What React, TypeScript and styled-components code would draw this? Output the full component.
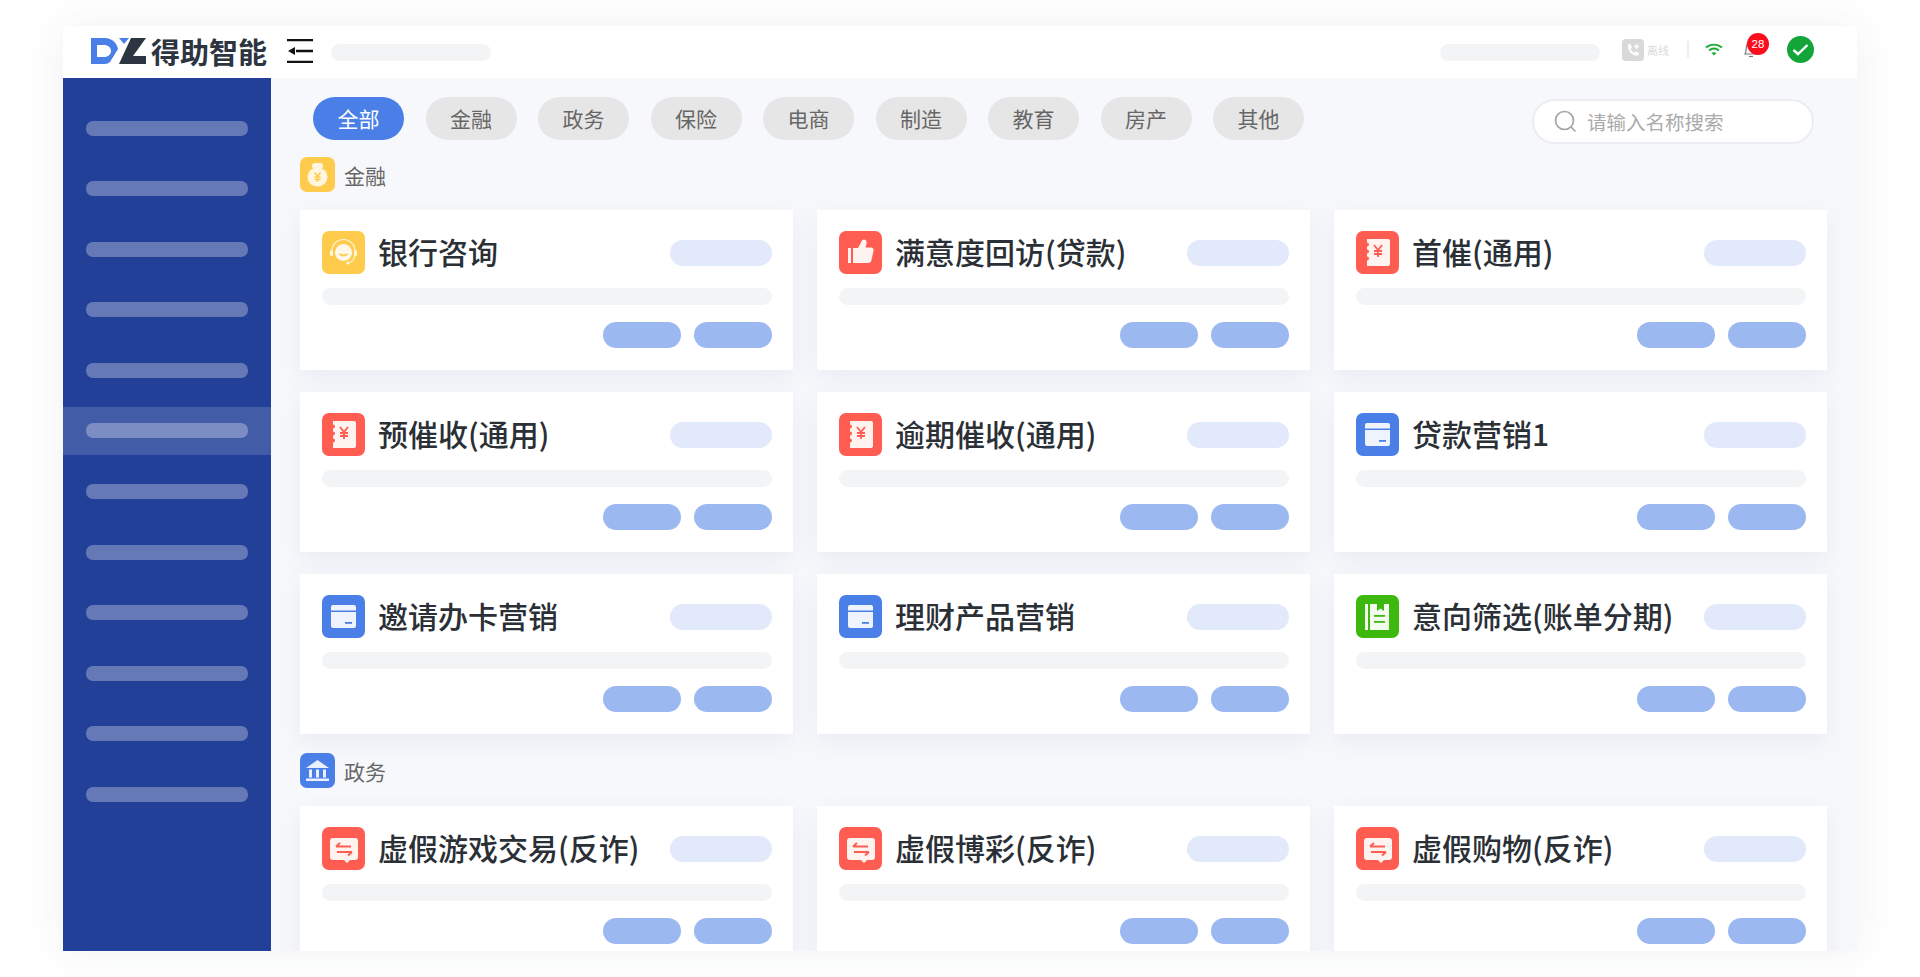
import React from "react";
import styled, { createGlobalStyle } from "styled-components";

const GlobalStyle = createGlobalStyle`
  html, body {
    margin: 0;
    padding: 0;
    background: #fff;
    font-family: "Noto Sans CJK SC", "Noto Sans", sans-serif;
  }
  * {
    box-sizing: border-box;
  }
`;

const Page = styled.div`
  width: 1920px;
  height: 977px;
  padding: 26px 63px;
  overflow: hidden;
`;

const Frame = styled.div`
  width: 1794px;
  height: 925px;
  display: flex;
  flex-direction: column;
  background: #fff;
  box-shadow: 0 0 40px rgba(40, 50, 80, 0.07);
`;

const Header = styled.header`
  height: 52px;
  flex: none;
  display: flex;
  align-items: center;
  padding: 0 43px 0 28px;
  background: #fff;
`;

const Brand = styled.div`
  display: flex;
  align-items: center;
  gap: 4px;
  margin-right: 20px;
  margin-bottom: 2px;
`;

const BrandName = styled.span`
  font-size: 29px;
  line-height: 32px;
  font-weight: 700;
  color: #2c3540;
  white-space: nowrap;
`;

const Skeleton = styled.div<{ $w: number; $h?: number; $color?: string }>`
  width: ${(p) => p.$w}px;
  height: ${(p) => p.$h ?? 17}px;
  flex: none;
  border-radius: ${(p) => ((p.$h ?? 17) >= 26 ? 13 : 9)}px;
  background: ${(p) => p.$color ?? "#f3f4f6"};
`;

const MenuButton = styled.div`
  display: flex;
  margin-right: 18px;
  margin-bottom: 2px;
`;

const HeaderRight = styled.div`
  margin-left: auto;
  display: flex;
  align-items: center;
  gap: 22px;
`;

const StatusGroup = styled.div`
  display: flex;
  align-items: center;
  margin-bottom: 5px;
`;

const OfflineText = styled.span`
  font-size: 11px;
  color: #dcdcdc;
  margin-left: 3px;
  white-space: nowrap;
`;

const Divider = styled.div`
  width: 2px;
  height: 17px;
  background: #eeeeee;
  margin: 0 16px 0 18px;
`;

const BellWrap = styled.div`
  position: relative;
  width: 24px;
  height: 24px;
  margin: 0 19px 7px 21px;
  display: flex;
  align-items: flex-end;
`;

const Badge = styled.span`
  position: absolute;
  left: 3px;
  top: -1px;
  width: 22px;
  height: 22px;
  border-radius: 50%;
  background: #fb0d1b;
  color: #fff;
  font-family: "Liberation Sans", sans-serif;
  font-size: 11.5px;
  line-height: 22px;
  text-align: center;
`;

const Body = styled.div`
  flex: 1;
  min-height: 0;
  display: flex;
`;

const Sidebar = styled.aside`
  width: 208px;
  flex: none;
  padding-top: 26px;
  background: #234099;
`;

const SideRow = styled.div<{ $active?: boolean }>`
  height: 48px;
  margin-bottom: 12.6px;
  padding: 0 23px;
  display: flex;
  align-items: center;
  background: ${(p) => (p.$active ? "rgba(255,255,255,0.15)" : "transparent")};
`;

const SideBar = styled.div`
  width: 163px;
  height: 15px;
  border-radius: 7px;
  background: rgba(255, 255, 255, 0.3);
`;

const Main = styled.main`
  flex: 1;
  min-width: 0;
  overflow: hidden;
  padding: 19px 30px 0 29px;
  background: #f7f8fb;
`;

const TabBar = styled.div`
  display: flex;
  align-items: flex-start;
  padding: 0 13px 0 13px;
  margin-bottom: 13px;
`;

const Tab = styled.div<{ $active?: boolean }>`
  width: 91px;
  height: 43px;
  margin-right: 21.5px;
  border-radius: 22px;
  font-size: 21px;
  line-height: 43px;
  text-align: center;
  color: ${(p) => (p.$active ? "#fff" : "#666")};
  background: ${(p) => (p.$active ? "#4a7fe8" : "#e6e6e6")};
`;

const Search = styled.div`
  margin-left: auto;
  margin-top: 2px;
  width: 282px;
  height: 45px;
  display: flex;
  align-items: center;
  gap: 10px;
  padding-left: 20px;
  background: #fff;
  border: 2px solid #ebedf3;
  border-radius: 23px;
  font-size: 19.5px;
  color: #aaaaaa;
  white-space: nowrap;
`;

const SectionTitle = styled.div<{ $top?: number }>`
  display: flex;
  align-items: center;
  gap: 9px;
  height: 35px;
  margin-top: ${(p) => p.$top ?? 0}px;
  margin-bottom: 18px;
  font-size: 21px;
  color: #666;
`;

const CardGrid = styled.div`
  display: grid;
  grid-template-columns: repeat(3, 493px);
  column-gap: 24px;
  row-gap: 22px;
`;

const Card = styled.div`
  height: 160px;
  padding: 21px 21px 0 22px;
  background: #fff;
  box-shadow: 0 8px 22px rgba(90, 110, 170, 0.09);
`;

const CardHead = styled.div`
  height: 43px;
  display: flex;
  align-items: center;
  margin-bottom: 14px;
`;

const CardTitle = styled.div`
  margin-left: 13px;
  margin-right: auto;
  padding-bottom: 3px;
  font-size: 30px;
  line-height: 40px;
  font-weight: 500;
  color: #2b2f36;
  white-space: nowrap;
`;

const CardFoot = styled.div`
  display: flex;
  justify-content: flex-end;
  gap: 13px;
  margin-top: 17px;
`;

const TileBox = styled.div<{ $color: string; $size: number }>`
  width: ${(p) => p.$size}px;
  height: ${(p) => p.$size}px;
  flex: none;
  display: flex;
  border-radius: 7px;
  background: ${(p) => p.$color};
`;

const YELLOW = "#ffcb4c";
const RED = "#ff5d52";
const BLUE = "#4a7fe8";
const GREEN = "#3cb80f";

const W = "#fff3f0";

const Yen = ({ c, x, y }: { c: string; x: number; y: number }) => (
  <path
    d={`M${x - 4} ${y - 6}L${x} ${y - 1}L${x + 4} ${y - 6}M${x} ${y - 1}V${y + 6}M${x - 4} ${y}H${x + 4}M${x - 4} ${y + 3}H${x + 4}`}
    stroke={c}
    strokeWidth="1.8"
    fill="none"
  />
);

type IconKind = "headset" | "thumb" | "receipt" | "card" | "book" | "swap";

const tileColors: Record<IconKind, string> = {
  headset: YELLOW,
  thumb: RED,
  receipt: RED,
  card: BLUE,
  book: GREEN,
  swap: RED,
};

const Glyph = ({ kind }: { kind: IconKind }) => {
  switch (kind) {
    case "headset":
      return (
        <>
          <path d="M10 22V20A11.5 11.5 0 0 1 33 20V22" stroke="#fff6df" strokeWidth="1.2" fill="none" />
          <circle cx="21.5" cy="21.5" r="8.5" fill="#fff8e8" />
          <rect x="8" y="19" width="3" height="6" rx="1.5" fill="#fff6df" />
          <rect x="32" y="19" width="3" height="6" rx="1.5" fill="#fff6df" />
          <path d="M17 23Q21.5 27 26 23Q21.5 25 17 23Z" fill={YELLOW} stroke={YELLOW} />
          <path d="M33 24Q32 31 26 32" stroke="#fff6df" strokeWidth="1.2" fill="none" />
          <circle cx="26" cy="32" r="1.6" fill="#fff6df" />
        </>
      );
    case "thumb":
      return (
        <>
          <rect x="9" y="17" width="3" height="15" fill={W} />
          <path
            d="M14 17H19L23 9.500Q24.500 8 26.500 9Q28 10 27.500 13L26.500 16.500H32Q35 16.500 34.500 20L32.500 29Q32 32 29 32H14Z"
            fill={W}
          />
        </>
      );
    case "receipt":
      return (
        <>
          <path
            d="M11 8H32Q34 8 34 10V33Q34 35 32 35H11V29.500A2 2 0 0 0 11 25.500V22.500A2 2 0 0 0 11 18.500V15.500A2 2 0 0 0 11 11.500Z"
            fill={W}
          />
          <Yen c={RED} x={22} y={20} />
        </>
      );
    case "card":
      return (
        <>
          <rect x="9" y="10" width="25" height="23" rx="2" fill="#eef3fe" />
          <rect x="9" y="15.500" width="25" height="1.500" fill={BLUE} />
          <rect x="23" y="27" width="7" height="1.800" fill={BLUE} />
        </>
      );
    case "book":
      return (
        <>
          <rect x="9" y="9" width="3" height="26" fill="#f2fbed" />
          <path d="M14 9H21V16L24.500 13.500L28 16V9H33V35H14Z" fill="#f2fbed" />
          <rect x="18" y="20" width="11" height="1.800" fill={GREEN} />
          <rect x="18" y="26" width="11" height="1.800" fill={GREEN} />
        </>
      );
    case "swap":
      return (
        <>
          <path
            d="M11 11H33Q36 11 36 14V30Q36 33 33 33H28L25 36L22 33H11Q8 33 8 30V14Q8 11 11 11Z"
            fill={W}
          />
          <path
            d="M14 19.500H29M14 19.500L18 16M30 25H15M30 25L26 28.500"
            stroke={RED}
            strokeWidth="2"
            fill="none"
          />
        </>
      );
  }
};

const CardIcon = ({ kind }: { kind: IconKind }) => (
  <TileBox $color={tileColors[kind]} $size={43}>
    <svg width="43" height="43" viewBox="0 0 43 43">
      <Glyph kind={kind} />
    </svg>
  </TileBox>
);

const MoneyBagIcon = () => (
  <TileBox $color={YELLOW} $size={35}>
    <svg width="35" height="35" viewBox="0 0 35 35">
      <rect x="12" y="6" width="11" height="6" rx="3" fill="#fff6e0" />
      <ellipse cx="17.500" cy="20" rx="10" ry="9.500" fill="#fff6e0" />
      <path d="M14.500 15.500L17.500 19L20.500 15.500M17.500 19V25M14.500 20H20.500M14.500 22.500H20.500" stroke={YELLOW} strokeWidth="1.500" fill="none" />
    </svg>
  </TileBox>
);

const BankIcon = () => (
  <TileBox $color={BLUE} $size={35}>
    <svg width="35" height="35" viewBox="0 0 35 35">
      <path d="M17.500 7L29 15H6Z" fill="#eaf0fd" />
      <rect x="9" y="16.500" width="3" height="8" fill="#eaf0fd" />
      <rect x="16" y="16.500" width="3" height="8" fill="#eaf0fd" />
      <rect x="23" y="16.500" width="3" height="8" fill="#eaf0fd" />
      <rect x="6" y="25.500" width="23" height="2.500" fill="#eaf0fd" />
    </svg>
  </TileBox>
);

const LogoMark = () => (
  <svg width="56" height="26" viewBox="0 0 56 26">
    <path
      fillRule="evenodd"
      d="M0 0H14C21 0 26 5 27 11L19 24C17.500 25.300 16 26 14 26H0ZM6 7V19H13C17 19 20 16.500 20 13C20 9.500 17 7 13 7Z"
      fill="#4a7fe8"
    />
    <path d="M28 0H38L33 6Z" fill="#4a7fe8" />
    <path d="M40 0H55L42 18H55V26H28Z" fill="#2c3540" />
  </svg>
);

const MenuIcon = () => (
  <svg width="26" height="24" viewBox="0 0 26 24">
    <path d="M0 1H26M9 12H26M0 23H26" stroke="#111" strokeWidth="2.600" />
    <path d="M1 12L8 8V16Z" fill="#111" />
  </svg>
);

const PhoneIcon = () => (
  <svg width="22" height="22" viewBox="0 0 22 22">
    <rect width="22" height="22" rx="4" fill="#d9d9d9" />
    <path
      d="M6 5.500L8.500 5L10 8.500L8.500 10C9.200 11.800 10.500 13 12.300 13.800L13.800 12.300L17 14L16.500 16.500C11 17.500 5 12 6 5.500Z"
      fill="#fff"
    />
    <path d="M14.500 5V10M12 7.500H17" stroke="#fff" strokeWidth="1.300" />
  </svg>
);

const WifiIcon = () => (
  <svg width="18" height="13" viewBox="0 0 18 13" fill="none">
    <path d="M1 4.500C5.500 0.700 12.500 0.700 17 4.500" stroke="#1aad3a" strokeWidth="1.900" />
    <path d="M4 7.500C7 5.200 11 5.200 14 7.500" stroke="#1aad3a" strokeWidth="1.900" />
    <path d="M6.500 10L9 12.500L11.500 10C10 9 8 9 6.500 10Z" fill="#1aad3a" />
  </svg>
);

const BellIcon = () => (
  <svg width="14" height="18" viewBox="0 0 14 18" fill="none">
    <path d="M1 14C2.500 12 2 9 2.500 6C3 3.500 5 2 7 2C9 2 11 3.500 11.500 6C12 9 11.500 12 13 14Z" stroke="#777" strokeWidth="1.200" />
    <path d="M5 16.500H9" stroke="#777" strokeWidth="1.200" />
  </svg>
);

const CheckIcon = () => (
  <svg width="27" height="27" viewBox="0 0 27 27">
    <circle cx="13.500" cy="13.500" r="13.500" fill="#13a538" />
    <path d="M6.500 14L11 18L20.500 9" stroke="#fff" strokeWidth="2.400" fill="none" />
  </svg>
);

const SearchIcon = () => (
  <svg width="23" height="23" viewBox="0 0 23 23" fill="none">
    <circle cx="10.500" cy="10.500" r="9" stroke="#a5a5a5" strokeWidth="1.700" />
    <path d="M17 17L21.500 21.500" stroke="#a5a5a5" strokeWidth="1.700" />
  </svg>
);

const tabs = ["全部", "金融", "政务", "保险", "电商", "制造", "教育", "房产", "其他"];

const financeCards: { title: string; icon: IconKind }[] = [
  { title: "银行咨询", icon: "headset" },
  { title: "满意度回访(贷款)", icon: "thumb" },
  { title: "首催(通用)", icon: "receipt" },
  { title: "预催收(通用)", icon: "receipt" },
  { title: "逾期催收(通用)", icon: "receipt" },
  { title: "贷款营销1", icon: "card" },
  { title: "邀请办卡营销", icon: "card" },
  { title: "理财产品营销", icon: "card" },
  { title: "意向筛选(账单分期)", icon: "book" },
];

const govCards: { title: string; icon: IconKind }[] = [
  { title: "虚假游戏交易(反诈)", icon: "swap" },
  { title: "虚假博彩(反诈)", icon: "swap" },
  { title: "虚假购物(反诈)", icon: "swap" },
];

const PillTag = styled(Skeleton)`
  margin-top: 1px;
`;

const SceneCard = ({ title, icon }: { title: string; icon: IconKind }) => (
  <Card>
    <CardHead>
      <CardIcon kind={icon} />
      <CardTitle>{title}</CardTitle>
      <PillTag $w={102} $h={26} $color="#e2e9fa" />
    </CardHead>
    <Skeleton $w={450} />
    <CardFoot>
      <Skeleton $w={78} $h={26} $color="#9cb8f1" />
      <Skeleton $w={78} $h={26} $color="#9cb8f1" />
    </CardFoot>
  </Card>
);

export default function App() {
  return (
    <Page>
      <GlobalStyle />
      <Frame>
        <Header>
          <Brand>
            <LogoMark />
            <BrandName>得助智能</BrandName>
          </Brand>
          <MenuButton>
            <MenuIcon />
          </MenuButton>
          <Skeleton $w={160} />
          <HeaderRight>
            <Skeleton $w={160} />
            <StatusGroup>
              <PhoneIcon />
              <OfflineText>离线</OfflineText>
              <Divider />
              <WifiIcon />
              <BellWrap>
                <BellIcon />
                <Badge>28</Badge>
              </BellWrap>
              <CheckIcon />
            </StatusGroup>
          </HeaderRight>
        </Header>
        <Body>
          <Sidebar>
            {Array.from({ length: 12 }, (_, i) => (
              <SideRow key={i} $active={i === 5}>
                <SideBar />
              </SideRow>
            ))}
          </Sidebar>
          <Main>
            <TabBar>
              {tabs.map((t, i) => (
                <Tab key={t} $active={i === 0}>
                  {t}
                </Tab>
              ))}
              <Search>
                <SearchIcon />
                请输入名称搜索
              </Search>
            </TabBar>
            <SectionTitle>
              <MoneyBagIcon />
              金融
            </SectionTitle>
            <CardGrid>
              {financeCards.map((c) => (
                <SceneCard key={c.title} {...c} />
              ))}
            </CardGrid>
            <SectionTitle $top={19}>
              <BankIcon />
              政务
            </SectionTitle>
            <CardGrid>
              {govCards.map((c) => (
                <SceneCard key={c.title} {...c} />
              ))}
            </CardGrid>
          </Main>
        </Body>
      </Frame>
    </Page>
  );
}
